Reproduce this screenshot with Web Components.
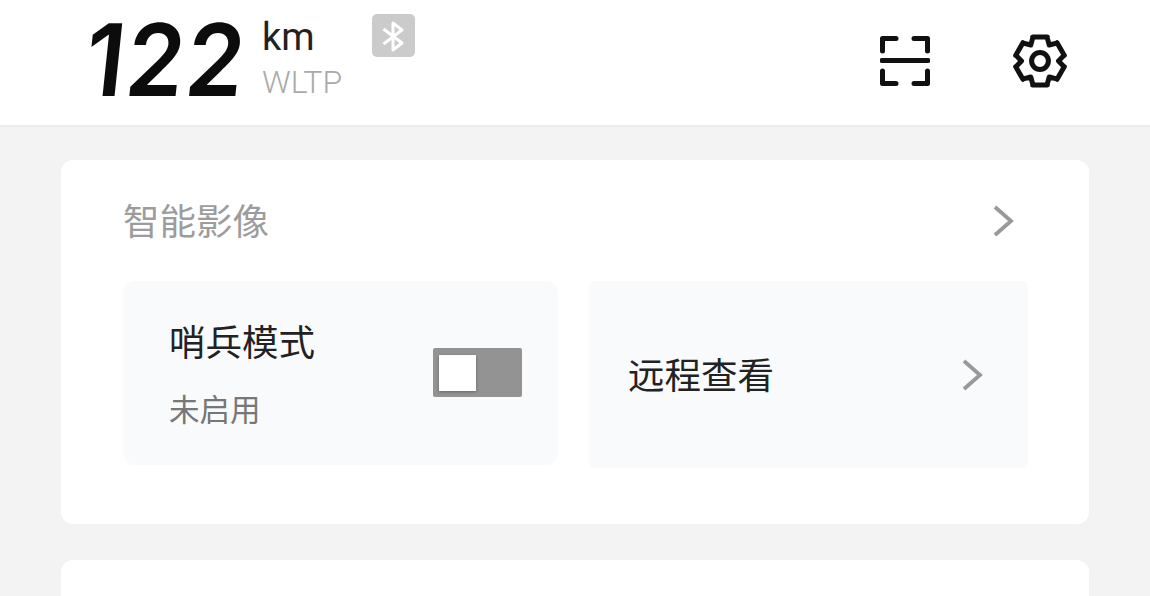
<!DOCTYPE html>
<html>
<head>
<meta charset="utf-8">
<style>
  html, body { margin: 0; height: 596px; overflow: hidden; background: #f3f3f3; }
  body { font-family: "Noto Sans CJK SC", Roboto, sans-serif; }
  .next-card { height: 36px; margin: 36px 61px 0; background: #fff; border-radius: 12px 12px 0 0; }
</style>
</head>
<body>
<range-header></range-header>
<page-card title-text="智能影像">
  <sentry-tile></sentry-tile>
  <remote-tile></remote-tile>
</page-card>
<div class="next-card"></div>

<script>
/**
 * Chevron used by the card title and the remote view tile.
 */
class ChevronIcon extends HTMLElement {
  constructor() {
    super();
    this.attachShadow({ mode: 'open' });
    this.shadowRoot.innerHTML = `
      <style>
        :host { display: block; width: 22px; height: 32px; }
        svg { display: block; }
      </style>
      <svg width="22" height="32" viewBox="0 0 22 32" fill="none" stroke="#999" stroke-width="3.8">
        <path d="M2 2 L18 16 L2 30"/>
      </svg>
    `;
  }
}

/**
 * Gear icon, outline worked out from the tooth angles.
 */
class GearIcon extends HTMLElement {
  constructor() {
    super();
    this.attachShadow({ mode: 'open' });
    const pts = [];
    for (let i = 0; i < 6; i++) {
      const a = -90 + i * 60;
      [[-30, 18.5], [-17, 24.5], [-17, 25], [17, 25], [17, 24.5]].forEach(([d, r]) => {
        const t = (a + d) * Math.PI / 180;
        pts.push((28 + r * Math.cos(t)).toFixed(2) + ' ' + (28 + r * Math.sin(t)).toFixed(2));
      });
    }
    this.shadowRoot.innerHTML = `
      <style>
        :host { display: block; width: 56px; height: 56px; }
        svg { display: block; }
      </style>
      <svg width="56" height="56" viewBox="0 0 56 56" fill="none" stroke="#111" stroke-width="5" stroke-linejoin="round">
        <path d="M${pts.join(' L')} Z"/>
        <circle cx="28" cy="28" r="8.4"/>
      </svg>
    `;
  }
}

/**
 * Top bar with the remaining range.
 */
class RangeHeader extends HTMLElement {
  constructor() {
    super();
    this.attachShadow({ mode: 'open' });
    this.shadowRoot.innerHTML = `
      <style>
        :host {
          display: flex;
          box-sizing: border-box;
          height: 127px;
          background: #fff;
          border-bottom: 2px solid #ececec;
          padding-left: 79px;
          font-family: Roboto, sans-serif;
        }
        .value {
          font: 600 100px/119px Inter, sans-serif;
          color: #0c0c0c;
          letter-spacing: 2px;
          width: 183px;
          transform: skewX(-6deg) scaleX(.93);
          transform-origin: left bottom;
        }
        .unit { width: 110px; padding-top: 15px; }
        .km { font-size: 38px; line-height: 44px; color: #222; }
        .wltp { font-size: 32px; line-height: 46px; color: #aaa; font-weight: 300; }
        .bt {
          width: 43px;
          height: 43px;
          margin-top: 14px;
          background: #cbcbcb;
          border-radius: 5px;
        }
        .actions {
          margin-left: auto;
          margin-right: 82px;
          display: flex;
          align-items: center;
          gap: 82px;
          height: 122px;
        }
        svg { display: block; }
      </style>
      <div class="value">122</div>
      <div class="unit">
        <div class="km">km</div>
        <div class="wltp">WLTP</div>
      </div>
      <div class="bt">
        <svg width="43" height="43" viewBox="0 0 43 43" fill="none" stroke="#fff" stroke-width="3" stroke-linejoin="round">
          <path d="M11.500 15 L30 29 L21 36 L21 9 L30 16 L11.500 30"/>
        </svg>
      </div>
      <div class="actions">
        <svg width="50" height="50" viewBox="0 0 50 50" fill="none" stroke="#111" stroke-width="5" stroke-linejoin="round" stroke-linecap="round">
          <path d="M2.500 15 V2.500 H16 M34 2.500 H47.500 V15 M2.500 35 V47.500 H16 M34 47.500 H47.500 V35"/>
          <path d="M2 24.500 H48"/>
        </svg>
        <gear-icon></gear-icon>
      </div>
    `;
  }
}

/**
 * White card with a title row and two tiles.
 */
class PageCard extends HTMLElement {
  constructor() {
    super();
    this.attachShadow({ mode: 'open' });
    this.shadowRoot.innerHTML = `
      <style>
        :host {
          display: block;
          box-sizing: border-box;
          height: 364px;
          margin: 33px 61px 0;
          padding: 0 61px 0 62px;
          background: #fff;
          border-radius: 12px;
        }
        .head {
          display: flex;
          align-items: center;
          justify-content: space-between;
          height: 121px;
          font-size: 36.500px;
          color: #9c9c9c;
        }
        .title { margin-top: -3px; }
        .head chevron-icon { margin-right: 13px; }
        .tiles {
          display: grid;
          grid-template-columns: 435px 439px;
          gap: 31px;
          align-items: start;
        }
      </style>
      <div class="head"><span class="title"></span><chevron-icon></chevron-icon></div>
      <div class="tiles"><slot></slot></div>
    `;
    this.shadowRoot.querySelector('.title').textContent = this.getAttribute('title-text');
  }
}

/**
 * Sentry mode tile with its switch.
 */
class SentryTile extends HTMLElement {
  constructor() {
    super();
    this.attachShadow({ mode: 'open' });
    this.shadowRoot.innerHTML = `
      <style>
        :host {
          display: flex;
          align-items: center;
          justify-content: space-between;
          box-sizing: border-box;
          height: 184px;
          padding: 0 36px 2px 46px;
          background: #f9fafc;
          border-radius: 12px;
        }
        .name { font-size: 36.500px; line-height: 50px; color: #222; padding-top: 1px; }
        .state { font-size: 30.500px; line-height: 44px; margin-top: 20px; color: #777; }
        .switch {
          box-sizing: border-box;
          width: 89px;
          height: 49px;
          padding: 7px 6px;
          background: #939393;
          border-radius: 2px;
        }
        .knob {
          width: 37px;
          height: 36px;
          background: #fff;
          box-shadow: 0 1px 3px rgba(0,0,0,.3);
        }
      </style>
      <div>
        <div class="name">哨兵模式</div>
        <div class="state">未启用</div>
      </div>
      <div class="switch"><div class="knob"></div></div>
    `;
  }
}

/**
 * Remote view tile.
 */
class RemoteTile extends HTMLElement {
  constructor() {
    super();
    this.attachShadow({ mode: 'open' });
    this.shadowRoot.innerHTML = `
      <style>
        :host {
          display: flex;
          align-items: center;
          justify-content: space-between;
          box-sizing: border-box;
          height: 187px;
          padding: 0 44px 0 39px;
          background: #f9fafc;
          border-radius: 6px;
          font-size: 36.500px;
          color: #222;
        }
        span { margin-top: -3px; }
      </style>
      <span>远程查看</span>
      <chevron-icon></chevron-icon>
    `;
  }
}

// Register custom elements
customElements.define('chevron-icon', ChevronIcon);
customElements.define('gear-icon', GearIcon);
customElements.define('range-header', RangeHeader);
customElements.define('page-card', PageCard);
customElements.define('sentry-tile', SentryTile);
customElements.define('remote-tile', RemoteTile);
</script>
</body>
</html>
